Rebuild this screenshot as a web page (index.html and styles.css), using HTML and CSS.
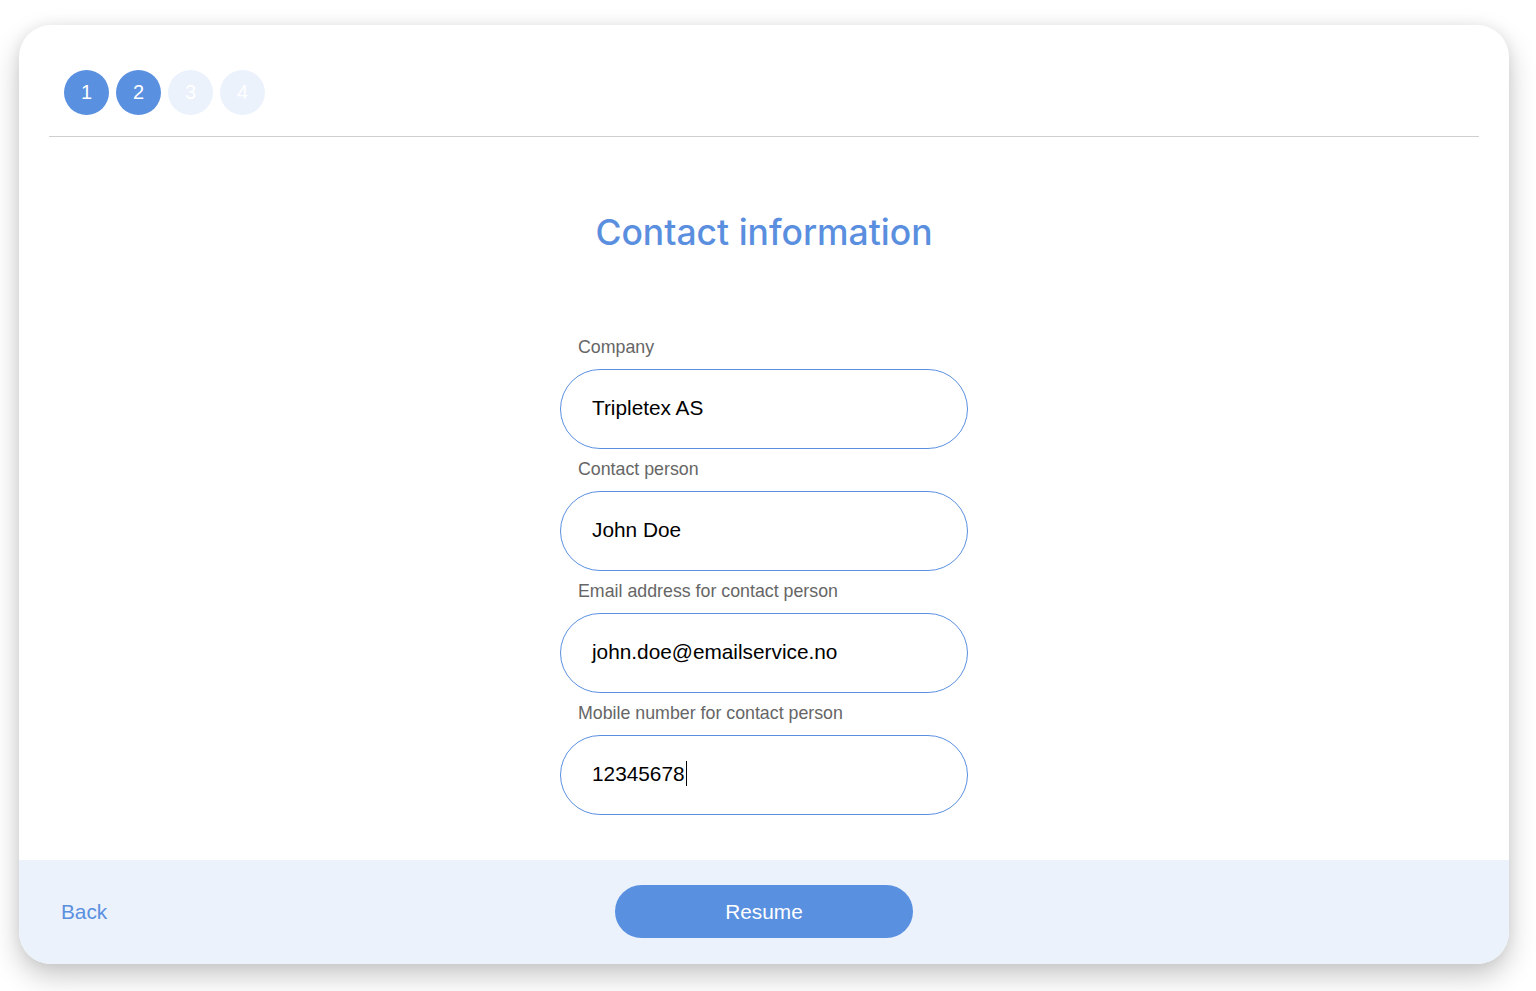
FILE: index.html
```html
<!DOCTYPE html>
<html>
<head>
<meta charset="utf-8">
<link rel="stylesheet" href="styles.css">
</head>
<body>
<div class="page">
  <div class="card">
    <div class="main">
      <div class="steps">
        <div class="step active">1</div>
        <div class="step active">2</div>
        <div class="step">3</div>
        <div class="step">4</div>
      </div>
      <div class="divider"></div>
      <h1 class="title">Contact information</h1>
      <form class="form">
        <label class="label">Company</label>
        <div class="field">Tripletex AS</div>
        <label class="label">Contact person</label>
        <div class="field">John Doe</div>
        <label class="label">Email address for contact person</label>
        <div class="field">john.doe@emailservice.no</div>
        <label class="label">Mobile number for contact person</label>
        <div class="field">12345678<span class="caret"></span></div>
      </form>
    </div>
    <div class="footer">
      <a class="back">Back</a>
      <button class="resume" type="button">Resume</button>
    </div>
  </div>
</div>
</body>
</html>
```
FILE: styles.css
```css
html, body {
  margin: 0;
  padding: 0;
  background: #f7f7f7;
}
body {
  font-family: "Liberation Sans", Arial, sans-serif;
}
.page {
  width: 1536px;
  height: 991px;
  padding: 25px 27px 27px 19px;
  box-sizing: border-box;
  background: #ffffff;
}
.card {
  width: 1490px;
  height: 939px;
  background: #ffffff;
  border-radius: 32px;
  box-shadow: 0 12px 28px rgba(0, 0, 0, 0.22), 0 0 14px rgba(0, 0, 0, 0.06);
  display: flex;
  flex-direction: column;
  overflow: hidden;
}
.main {
  flex: 1;
  display: flex;
  flex-direction: column;
}
.steps {
  display: flex;
  gap: 7px;
  padding: 45px 0 0 45px;
}
.step {
  width: 45px;
  height: 45px;
  border-radius: 50%;
  background: #ebf2fc;
  color: #ffffff;
  font-size: 20px;
  display: flex;
  align-items: center;
  justify-content: center;
}
.step.active {
  background: #5990e0;
}
.divider {
  margin: 21px 30px 0 30px;
  height: 1px;
  background: #cfcfcf;
}
.title {
  margin: 74px 0 0 0;
  text-align: center;
  font-family: Inter, "Open Sans", sans-serif;
  font-weight: 500;
  font-size: 35.5px;
  line-height: 44px;
  color: #5a8fdf;
}
.form {
  margin: 82px auto 0 auto;
  width: 408px;
  display: flex;
  flex-direction: column;
}
.label {
  display: block;
  padding-left: 18px;
  font-size: 17.8px;
  line-height: 20px;
  color: #666666;
  margin-bottom: 12px;
}
.field {
  box-sizing: border-box;
  height: 80px;
  border: 1.5px solid #5b90e0;
  border-radius: 40px;
  padding: 0 0 3px 31px;
  display: flex;
  align-items: center;
  font-size: 20.8px;
  color: #000000;
  margin-bottom: 10px;
}
.caret {
  display: inline-block;
  width: 1px;
  height: 25px;
  background: #000;
  margin-left: 1px;
}
.footer {
  height: 104px;
  flex: none;
  background: #ecf2fc;
  display: flex;
  align-items: center;
  position: relative;
  padding-left: 42px;
}
.back {
  font-size: 20.8px;
  color: #5a8fdf;
}
.resume {
  position: absolute;
  left: 596px;
  top: 25px;
  width: 298px;
  height: 53px;
  border: none;
  border-radius: 27px;
  background: #5990e0;
  color: #ffffff;
  font-family: "Liberation Sans", Arial, sans-serif;
  font-size: 20.8px;
}
```
